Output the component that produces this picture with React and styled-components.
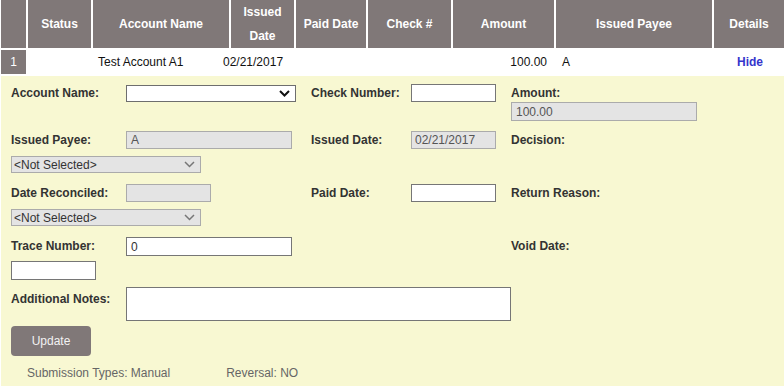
import styled, { createGlobalStyle } from "styled-components";

const GlobalStyle = createGlobalStyle`
  body {
    margin: 0;
    background: #ffffff;
    font-family: "Liberation Sans", Arial, sans-serif;
    font-size: 12px;
  }
`;

const headers = ["", "Status", "Account Name", "Issued Date", "Paid Date", "Check #", "Amount", "Issued Payee", "Details"];

function Chevron({ color, weight }) {
  return (
    <svg width="11" height="7" viewBox="0 0 11 7">
      <path d="M1 1 L5.5 5.5 L10 1" fill="none" stroke={color} strokeWidth={weight} />
    </svg>
  );
}

function App() {
  return (
    <Page>
      <GlobalStyle />
      <HeaderRow>
        {headers.map((h, i) => (
          <HeadCell key={i}>{h}</HeadCell>
        ))}
      </HeaderRow>

      <BodyRow>
        <IndexCell>1</IndexCell>
        <Cell />
        <Cell>Test Account A1</Cell>
        <Cell>02/21/2017</Cell>
        <Cell />
        <Cell />
        <Cell $align="right">100.00</Cell>
        <Cell>A</Cell>
        <Cell $align="center"><HideLink>Hide</HideLink></Cell>
      </BodyRow>

      <Panel>
        <FormRow>
          <Label>Account Name:</Label>
          <SelectBox $w={170} $h={17} $mt={1}>
            <span></span>
            <Chevron color="#111" weight={2} />
          </SelectBox>
          <Label>Check Number:</Label>
          <Input $w={85} />
          <Stack>
            <Label>Amount:</Label>
            <Input $w={186} $h={19} $disabled>100.00</Input>
          </Stack>
        </FormRow>

        <FormRow $mt={10}>
          <Label>Issued Payee:</Label>
          <Input $w={166} $disabled>A</Input>
          <Label>Issued Date:</Label>
          <Input $w={85} $disabled $pad={3}>02/21/2017</Input>
          <Label>Decision:</Label>
        </FormRow>
        <SelectBox $w={190} $h={17} $mt={7} $disabled>
          <span>&lt;Not Selected&gt;</span>
          <Chevron color="#777" weight={1.5} />
        </SelectBox>

        <FormRow $mt={11}>
          <Label>Date Reconciled:</Label>
          <Input $w={85} $disabled />
          <Label>Paid Date:</Label>
          <Input $w={85} />
          <Label>Return Reason:</Label>
        </FormRow>
        <SelectBox $w={190} $h={17} $mt={7} $disabled>
          <span>&lt;Not Selected&gt;</span>
          <Chevron color="#777" weight={1.5} />
        </SelectBox>

        <FormRow $mt={11}>
          <Label>Trace Number:</Label>
          <Input $w={166} $h={19}>0</Input>
          <span />
          <span />
          <Label>Void Date:</Label>
        </FormRow>
        <Input $w={85} $h={19} $mt={5} />

        <FormRow $mt={7}>
          <Label $pt={3}>Additional Notes:</Label>
          <NotesBox />
        </FormRow>

        <UpdateButton>Update</UpdateButton>

        <Footer>
          <span>Submission Types: Manual</span>
          <span>Reversal: NO</span>
        </Footer>
      </Panel>
    </Page>
  );
}

const Page = styled.div`
  width: 783px;
  padding-left: 1px;
`;

const HeaderRow = styled.div`
  display: grid;
  grid-template-columns: 25px 63px 136px 63px 70px 83px 101px 156px 70px;
  column-gap: 2px;
  height: 48px;
`;

const HeadCell = styled.div`
  background: #807878;
  color: #ffffff;
  font-weight: bold;
  font-size: 12px;
  line-height: 24px;
  text-align: center;
  display: flex;
  align-items: center;
  justify-content: center;
`;

const BodyRow = styled.div`
  display: grid;
  grid-template-columns: 25px 63px 123px 70px 70px 83px 108px 155px 70px;
  column-gap: 2px;
  height: 24px;
  margin-top: 2px;
`;

const Cell = styled.div`
  display: flex;
  align-items: center;
  justify-content: ${(p) => (p.$align === "right" ? "flex-end" : p.$align === "center" ? "center" : "flex-start")};
  padding: 0 ${(p) => (p.$align === "right" ? "8px" : "5px")};
  color: #111;
  font-size: 12px;
  white-space: nowrap;
`;

const IndexCell = styled(Cell)`
  background: #807878;
  color: #ffffff;
  justify-content: center;
  padding: 0;
`;

const HideLink = styled.span`
  color: #3535cc;
  font-weight: bold;
  margin-left: 2px;
`;

const Panel = styled.div`
  margin-top: 2px;
  background: #f8f8d2;
  padding: 8px 0 4px 10px;
  display: flex;
  flex-direction: column;
  align-items: flex-start;
`;

const FormRow = styled.div`
  display: grid;
  grid-template-columns: 115px 185px 100px 100px 1fr;
  align-items: start;
  width: 100%;
  margin-top: ${(p) => p.$mt || 0}px;
`;

const Label = styled.div`
  font-weight: bold;
  font-size: 12px;
  line-height: 18px;
  color: #333333;
  white-space: nowrap;
  padding-top: ${(p) => p.$pt || 0}px;
`;

const Stack = styled.div`
  display: flex;
  flex-direction: column;
`;

const Input = styled.div`
  box-sizing: border-box;
  width: ${(p) => p.$w}px;
  height: ${(p) => p.$h || 18}px;
  margin-top: ${(p) => p.$mt || 0}px;
  padding-left: ${(p) => p.$pad ?? 4}px;
  border: 1px solid ${(p) => (p.$disabled ? "#ababab" : "#767676")};
  background: ${(p) => (p.$disabled ? "#e4e4e4" : "#ffffff")};
  color: ${(p) => (p.$disabled ? "#555555" : "#333333")};
  font-size: 12px;
  display: flex;
  align-items: center;
`;

const SelectBox = styled.div`
  box-sizing: border-box;
  width: ${(p) => p.$w}px;
  height: ${(p) => p.$h}px;
  margin-top: ${(p) => p.$mt || 0}px;
  border: 1px solid ${(p) => (p.$disabled ? "#ababab" : "#6e6e6e")};
  background: ${(p) => (p.$disabled ? "#e4e4e4" : "#ffffff")};
  color: #333333;
  font-size: 12px;
  display: flex;
  align-items: center;
  justify-content: space-between;
  padding: 0 5px 0 2px;
`;

const NotesBox = styled.div`
  grid-column: 2 / span 3;
  box-sizing: border-box;
  width: 385px;
  height: 34px;
  border: 1px solid #767676;
  background: #ffffff;
`;

const UpdateButton = styled.button`
  margin-top: 5px;
  width: 80px;
  height: 30px;
  border: none;
  border-radius: 4px;
  background: #807878;
  color: #f2f2f2;
  font-family: "Liberation Sans", Arial, sans-serif;
  font-size: 12px;
  cursor: pointer;
`;

const Footer = styled.div`
  margin-top: 8px;
  margin-left: 16px;
  display: flex;
  gap: 56px;
  line-height: 18px;
  font-size: 12px;
  color: #666666;
`;

export default App;
